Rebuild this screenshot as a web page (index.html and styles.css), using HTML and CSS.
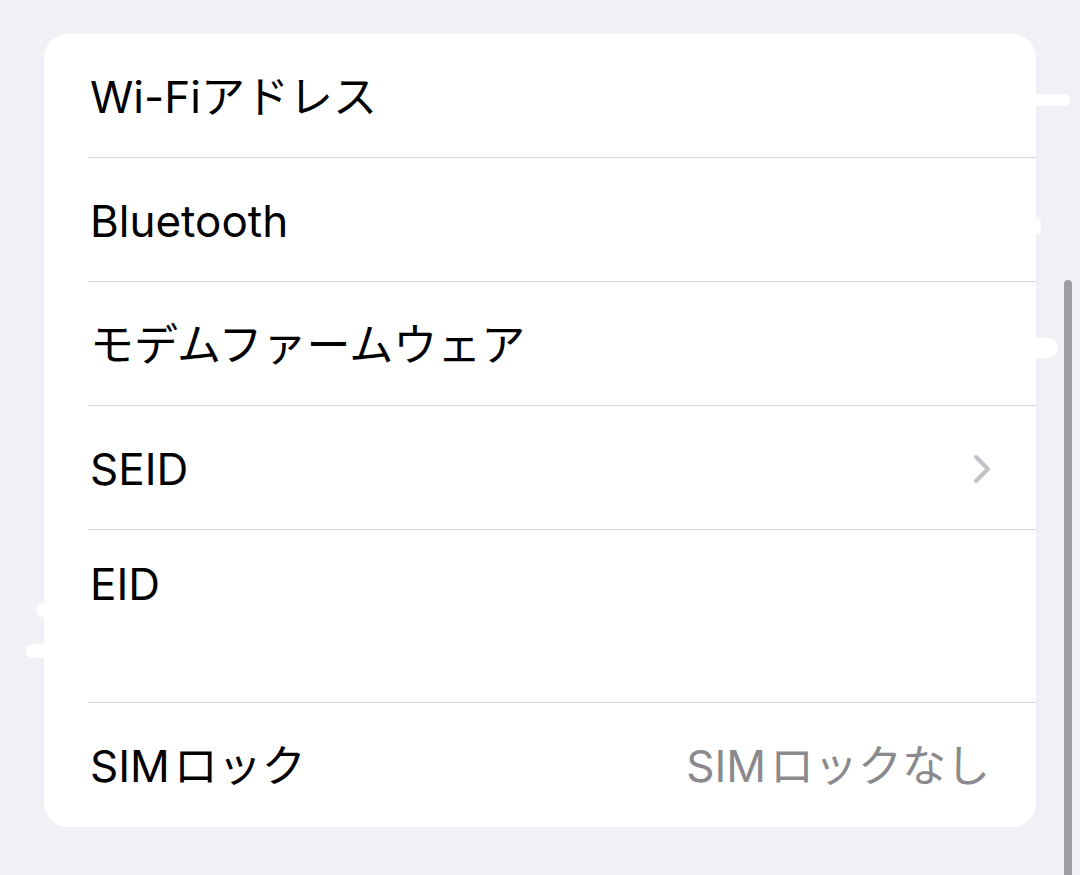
FILE: index.html
```html
<!DOCTYPE html>
<html lang="ja">
  <head>
    <meta charset="UTF-8" />
    <title>情報</title>
    <link rel="stylesheet" href="styles.css">
  </head>
  <body>
    <div class="page">
      <div class="card">
        <div class="row">
          <div class="cell"><span class="label">Wi-Fiアドレス</span></div>
        </div>
        <div class="row">
          <div class="cell"><span class="label">Bluetooth</span></div>
        </div>
        <div class="row">
          <div class="cell"><span class="label">モデムファームウェア</span></div>
        </div>
        <div class="row">
          <div class="cell">
            <span class="label">SEID</span>
            <svg class="chevron" width="22" height="32" viewBox="0 0 22 32">
              <path d="M5 4 L17 16 L5 28" fill="none" stroke="#c2c2c6" stroke-width="4" stroke-linecap="round" stroke-linejoin="round" />
            </svg>
          </div>
        </div>
        <div class="row">
          <div class="cell cell-tall">
            <span class="label">EID</span>
            <span class="value-hidden"></span>
          </div>
        </div>
        <div class="row">
          <div class="cell">
            <span class="label">SIM&#8202;ロック</span>
            <span class="value">SIM&#8202;ロックなし</span>
          </div>
        </div>
      </div>

      <!-- retouch marks left on the edges -->
      <span class="blot blot-r1"></span>
      <span class="blot blot-r2"></span>
      <span class="blot blot-r3"></span>
      <span class="blot blot-l1"></span>
      <span class="blot blot-l2"></span>

      <div class="scrollbar"></div>
    </div>
  </body>
</html>
```

FILE: styles.css
```css
body {
  margin: 0;
  background: #f1f0f6;
  font-family: Inter, "Noto Sans CJK JP", sans-serif;
  color: #000;
}
.page {
  position: relative;
  width: 1080px;
  height: 875px;
  padding: 34px 44px 0;
  box-sizing: border-box;
  overflow: hidden;
}
.card {
  background: #fff;
  border-radius: 24px;
  overflow: hidden;
}
.row {
  padding-left: 44px;
}
.cell {
  height: 124px;
  box-sizing: border-box;
  display: flex;
  align-items: center;
  justify-content: space-between;
  padding: 2px 46px 0 2px;
  border-bottom: 1.5px solid #d8d8dc;
}
.row:last-child .cell {
  border-bottom: none;
}
.cell-tall {
  height: 173px;
  flex-direction: column;
  align-items: flex-start;
  justify-content: flex-start;
  padding-top: 26px;
}
.label {
  font-size: 44px;
  line-height: 56px;
}
.value {
  font-size: 44px;
  line-height: 56px;
  color: #8a8a8e;
}
.value-hidden {
  display: block;
  height: 40px;
}
.chevron {
  margin-right: -3px;
}
.blot {
  position: absolute;
  background: #fff;
  border-radius: 10px;
}
.blot-r1 {
  left: 1030px;
  top: 94px;
  width: 40px;
  height: 12px;
}
.blot-r2 {
  left: 1030px;
  top: 218px;
  width: 11px;
  height: 16px;
}
.blot-r3 {
  left: 1030px;
  top: 338px;
  width: 28px;
  height: 20px;
}
.blot-l1 {
  left: 36px;
  top: 603px;
  width: 14px;
  height: 14px;
}
.blot-l2 {
  left: 26px;
  top: 644px;
  width: 24px;
  height: 14px;
}
.scrollbar {
  position: absolute;
  left: 1064px;
  top: 280px;
  width: 8px;
  height: 620px;
  border-radius: 4px;
  background: #9e9da4;
}
```
